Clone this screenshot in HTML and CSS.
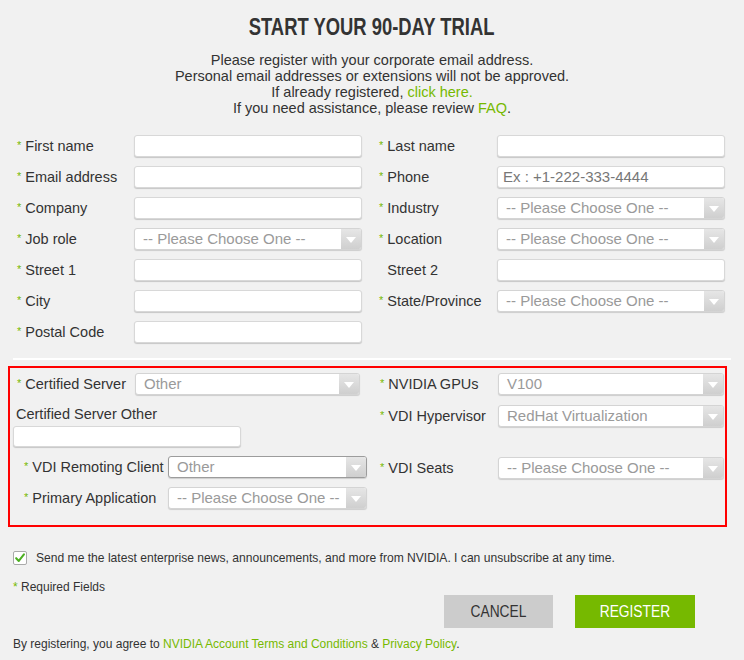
FILE: index.html
```html
<!DOCTYPE html>
<html lang="en">
<head>
<meta charset="utf-8">
<title>Start your 90-day trial</title>
<link rel="stylesheet" href="styles.css">
</head>
<body>
<div class="page">
  <h1 class="title"><span class="narrow">START YOUR 90-DAY TRIAL</span></h1>
  <div class="intro">
    <p>Please register with your corporate email address.</p>
    <p>Personal email addresses or extensions will not be approved.</p>
    <p>If already registered, <a href="#">click here.</a></p>
    <p>If you need assistance, please review <a href="#">FAQ</a>.</p>
  </div>

  <div class="grid">
    <label class="lbl"><span class="req">*</span>First name</label>
    <div class="input"></div>
    <span></span>
    <label class="lbl"><span class="req">*</span>Last name</label>
    <div class="input"></div>

    <label class="lbl"><span class="req">*</span>Email address</label>
    <div class="input"></div>
    <span></span>
    <label class="lbl"><span class="req">*</span>Phone</label>
    <div class="input"><span class="ph">Ex : +1-222-333-4444</span></div>

    <label class="lbl"><span class="req">*</span>Company</label>
    <div class="input"></div>
    <span></span>
    <label class="lbl"><span class="req">*</span>Industry</label>
    <div class="select"><span class="val">-- Please Choose One --</span><span class="arrow"></span></div>

    <label class="lbl"><span class="req">*</span>Job role</label>
    <div class="select"><span class="val">-- Please Choose One --</span><span class="arrow"></span></div>
    <span></span>
    <label class="lbl"><span class="req">*</span>Location</label>
    <div class="select"><span class="val">-- Please Choose One --</span><span class="arrow"></span></div>

    <label class="lbl"><span class="req">*</span>Street 1</label>
    <div class="input"></div>
    <span></span>
    <label class="lbl"><span class="req hide">*</span>Street 2</label>
    <div class="input"></div>

    <label class="lbl"><span class="req">*</span>City</label>
    <div class="input"></div>
    <span></span>
    <label class="lbl"><span class="req">*</span>State/Province</label>
    <div class="select"><span class="val">-- Please Choose One --</span><span class="arrow"></span></div>

    <label class="lbl"><span class="req">*</span>Postal Code</label>
    <div class="input"></div>
  </div>

  <div class="divider"></div>

  <div class="redbox">
    <div class="col-left">
      <div class="row row-a">
        <label class="lbl lbl-a"><span class="req">*</span>Certified Server</label>
        <div class="select sel-a"><span class="val">Other</span><span class="arrow"></span></div>
      </div>
      <label class="lbl-plain">Certified Server Other</label>
      <div class="input inp-other"></div>
      <div class="row row-b">
        <label class="lbl lbl-b"><span class="req">*</span>VDI Remoting Client</label>
        <div class="select sel-b focus"><span class="val">Other</span><span class="arrow"></span></div>
      </div>
      <div class="row row-b2">
        <label class="lbl lbl-b"><span class="req">*</span>Primary Application</label>
        <div class="select sel-b"><span class="val">-- Please Choose One --</span><span class="arrow"></span></div>
      </div>
    </div>
    <div class="col-right">
      <div class="row row-a">
        <label class="lbl lbl-r"><span class="req">*</span>NVIDIA GPUs</label>
        <div class="select sel-r"><span class="val">V100</span><span class="arrow"></span></div>
      </div>
      <div class="row row-r2">
        <label class="lbl lbl-r"><span class="req">*</span>VDI Hypervisor</label>
        <div class="select sel-r"><span class="val">RedHat Virtualization</span><span class="arrow"></span></div>
      </div>
      <div class="row row-r3">
        <label class="lbl lbl-r"><span class="req">*</span>VDI Seats</label>
        <div class="select sel-r"><span class="val">-- Please Choose One --</span><span class="arrow"></span></div>
      </div>
    </div>
  </div>

  <div class="optin">
    <span class="check"><svg width="14" height="14" viewBox="0 0 14 14"><path d="M2.5 7.2 L5.6 10.4 L11.6 2.8" fill="none" stroke="#4caf21" stroke-width="2.4" stroke-linecap="round" stroke-linejoin="round"/></svg></span>
    <span class="optin-text">Send me the latest enterprise news, announcements, and more from NVIDIA. I can unsubscribe at any time.</span>
  </div>

  <p class="required"><span class="req">*</span> Required Fields</p>

  <div class="buttons">
    <button class="btn btn-cancel"><span class="narrow">CANCEL</span></button>
    <button class="btn btn-register"><span class="narrow">REGISTER</span></button>
  </div>

  <p class="terms">By registering, you agree to <a href="#">NVIDIA Account Terms and Conditions</a> &amp; <a href="#">Privacy Policy</a>.</p>
</div>
</body>
</html>
```

FILE: styles.css
```css
* { box-sizing: border-box; }
html, body { margin: 0; padding: 0; }
body {
  background: #f1f1f1;
  color: #333;
  font-family: "Liberation Sans", Arial, sans-serif;
  width: 744px;
  height: 660px;
  overflow: hidden;
}
a { color: #76b900; text-decoration: none; }
p { margin: 0; }

.page { padding-top: 14px; }

.narrow {
  display: inline-block;
  transform: scaleX(0.8);
}

.title {
  margin: 0;
  text-align: center;
  font-family: "Liberation Sans", Arial, sans-serif;
  font-weight: bold;
  font-size: 23px;
  line-height: 26px;
  color: #333;
}

.intro {
  margin-top: 12px;
  text-align: center;
  font-size: 14.5px;
  line-height: 16px;
}

.grid {
  margin-top: 19px;
  display: grid;
  grid-template-columns: 121px 228px 13px 122px 228px;
  grid-auto-rows: 22px;
  row-gap: 9px;
  padding-left: 13px;
}

.lbl {
  font-size: 14.5px;
  line-height: 21px;
  padding-left: 4px;
  white-space: nowrap;
  color: #333;
}
.req { color: #76b900; font-size: 11px; margin-right: 4px; vertical-align: 2px; }
.req.hide { visibility: hidden; }

.input {
  height: 22px;
  background: #fff;
  border: 1px solid #d8d8d8;
  border-radius: 3px;
  box-shadow: 0 1px 1px rgba(0,0,0,0.18);
  font-size: 15px;
  line-height: 20px;
  padding-left: 5px;
}
.ph { color: #777; }

.select {
  height: 22px;
  background: #fff;
  border: 1px solid #d4d4d4;
  border-radius: 3px;
  box-shadow: 0 1px 1px rgba(0,0,0,0.15);
  display: flex;
  align-items: center;
  justify-content: space-between;
  overflow: hidden;
}
.select .val {
  color: #9a9a9a;
  font-size: 15px;
  line-height: 20px;
  padding-left: 8px;
  white-space: nowrap;
}
.select .arrow {
  width: 20px;
  height: 20px;
  flex: none;
  background: linear-gradient(#e6e6e6, #cfcfcf);
  position: relative;
}
.select .arrow::after {
  content: "";
  position: absolute;
  left: 5px;
  top: 8px;
  border-left: 5px solid transparent;
  border-right: 5px solid transparent;
  border-top: 6px solid #fff;
}
.select.focus { border-color: #9c9c9c; }

.divider {
  margin: 15px 13px 0 13px;
  height: 2px;
  background: #fff;
}

.redbox {
  margin: 6px 17px 0 8px;
  height: 161px;
  border: 2px solid #f00;
  display: flex;
}
.col-left { width: 359px; display: flex; flex-direction: column; }
.col-right { display: flex; flex-direction: column; padding-left: 7px; }

.row { display: flex; align-items: center; height: 22px; }
.row-a { margin-top: 5px; }
.lbl-a { width: 125px; padding-left: 7px; }
.sel-a { width: 225px; }
.lbl-plain {
  font-size: 14.5px;
  line-height: 18px;
  margin-top: 10px;
  padding-left: 6px;
  white-space: nowrap;
}
.inp-other { width: 228px; margin-left: 3px; margin-top: 3px; height: 21px; }
.row-b { margin-top: 9px; }
.row-b2 { margin-top: 9px; }
.lbl-b { width: 158px; padding-left: 14px; }
.sel-b { width: 199px; }

.lbl-r { width: 122px; padding-left: 4px; }
.sel-r { width: 226px; }
.row-r2 { margin-top: 10px; }
.row-r3 { margin-top: 30px; }

.optin {
  margin: 23px 0 0 13px;
  display: flex;
  align-items: center;
  height: 16px;
}
.check {
  width: 14px;
  height: 14px;
  background: #fff;
  border: 1px solid #aaa;
  border-radius: 2px;
  display: flex;
  align-items: center;
  justify-content: center;
}
.check svg { display: block; }
.optin-text {
  margin-left: 9px;
  font-size: 12.1px;
  color: #333;
}

.required {
  margin: 13px 0 0 13px;
  font-size: 12px;
  line-height: 16px;
}
.required .req { margin-right: 0; vertical-align: 0; font-size: 12px; }

.buttons {
  display: flex;
  justify-content: flex-end;
  gap: 22px;
  padding-right: 49px;
}
.btn {
  height: 33px;
  border: 0;
  border-radius: 0;
  padding: 0;
  font-family: "Liberation Sans", Arial, sans-serif;
  font-size: 16px;
}
.btn .narrow { transform: scaleX(0.86); }
.btn-cancel { width: 109px; background: #cccccc; color: #333; }
.btn-register { width: 120px; background: #76b900; color: #fff; }

.terms {
  margin: 8px 0 0 13px;
  font-size: 12px;
  line-height: 16px;
}
```
